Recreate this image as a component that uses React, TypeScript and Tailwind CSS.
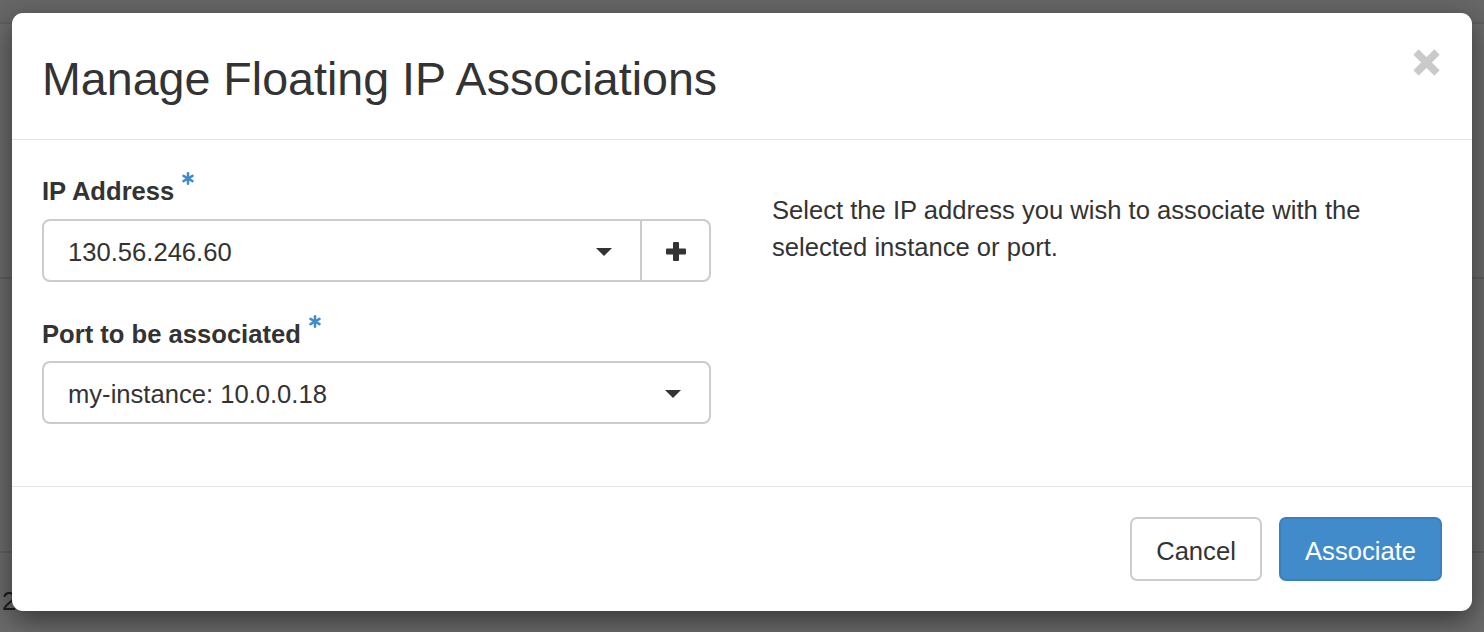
const font = { fontFamily: '"Liberation Sans", Arial, sans-serif' };

const Asterisk = () => (
  <svg width="12" height="13" viewBox="0 0 12 13" className="ml-[8px] -mt-[1px] shrink-0">
    <g stroke="#428bca" strokeWidth="2.5" strokeLinecap="round">
      <line x1="6" y1="1.3" x2="6" y2="11.7" />
      <line x1="1.5" y1="3.9" x2="10.5" y2="9.1" />
      <line x1="1.5" y1="9.1" x2="10.5" y2="3.9" />
    </g>
  </svg>
);

const Caret = () => (
  <svg width="16" height="8" viewBox="0 0 16 8" className="mt-[3px] mr-[28px] shrink-0">
    <polygon points="0,0 16,0 8,8" fill="#333" />
  </svg>
);

const FieldLabel = ({ children }: { children: string }) => (
  <label className="flex items-start text-[25.6px] leading-[36.6px] font-bold text-[#333] pt-[1px] mb-[9px]">
    <span>{children}</span>
    <Asterisk />
  </label>
);

export default function App() {
  return (
    <div className="relative w-[1484px] h-[632px] overflow-hidden bg-[#6b6b6b]" style={font}>
      {/* dimmed page behind the modal */}
      <div className="flex flex-col">
        <div className="h-[24px] bg-[#676767] border-b-2 border-[#5f5f5f]" />
        <div className="h-[255px] border-b-2 border-[#5f5f5f]" />
        <div className="h-[274px] border-b-2 border-[#5f5f5f]" />
        <div className="mt-[30px] pl-[2px] text-[25.6px] leading-[36.6px] text-[#1c1c1c]">2</div>
      </div>

      {/* backdrop + modal */}
      <div className="absolute inset-0 pl-[12px] pt-[13px]">
        <div className="w-[1460px] h-[598px] bg-white rounded-[11px] shadow-[0_9px_28px_rgba(0,0,0,0.5)] flex flex-col text-[#333]">
          {/* header */}
          <div className="h-[127px] border-b border-[#e5e5e5] pl-[30px] pr-[32px] flex items-start justify-between shrink-0">
            <h4 className="mt-[41px] text-[46.6px] leading-[50px] font-normal text-[#333]">
              Manage Floating IP Associations
            </h4>
            <button className="mt-[36px]" aria-label="Close">
              <svg width="27" height="27" viewBox="0 0 27 27">
                <g stroke="#cacaca" strokeWidth="7.5">
                  <line x1="3" y1="3" x2="24" y2="24" />
                  <line x1="24" y1="3" x2="3" y2="24" />
                </g>
              </svg>
            </button>
          </div>

          {/* body */}
          <div className="h-[346px] shrink-0 pt-[32px] px-[30px] flex">
            <div className="w-[669px]">
              <FieldLabel>IP Address</FieldLabel>
              <div className="h-[63px] rounded-[8px] border-2 border-[#cccccc] flex mb-[33px]">
                <div className="flex-1 flex items-center pl-[24px] text-[25.6px]">
                  <span className="flex-1 pt-[4px]">130.56.246.60</span>
                  <Caret />
                </div>
                <div className="w-[69px] border-l-2 border-[#cccccc] flex items-center justify-center">
                  <svg width="20" height="19" viewBox="0 0 20 19" className="mt-[2px]">
                    <rect x="7" y="0" width="6" height="19" rx="1" fill="#333" />
                    <rect x="0" y="6.5" width="20" height="6" rx="1" fill="#333" />
                  </svg>
                </div>
              </div>

              <FieldLabel>Port to be associated</FieldLabel>
              <div className="h-[63px] rounded-[8px] border-2 border-[#cccccc] flex items-center pl-[24px] text-[25.6px]">
                <span className="flex-1 pt-[4px]">my-instance: 10.0.0.18</span>
                <Caret />
              </div>
            </div>

            <div className="w-[669px] ml-[61px] pt-[20px] text-[25.6px] leading-[36.6px] text-[#333]">
              Select the IP address you wish to associate with the selected instance or port.
            </div>
          </div>

          {/* footer */}
          <div className="h-[125px] shrink-0 border-t border-[#e5e5e5] pt-[30px] pr-[30px] flex justify-end items-start gap-[17px]">
            <button className="w-[132px] h-[64px] pt-[4px] rounded-[7px] border-2 border-[#cccccc] bg-white text-[25.6px] text-[#333]">
              Cancel
            </button>
            <button className="w-[163px] h-[64px] pt-[4px] rounded-[7px] border-2 border-[#3a80c0] bg-[#428bca] text-[25.6px] text-white">
              Associate
            </button>
          </div>
        </div>
      </div>
    </div>
  );
}
